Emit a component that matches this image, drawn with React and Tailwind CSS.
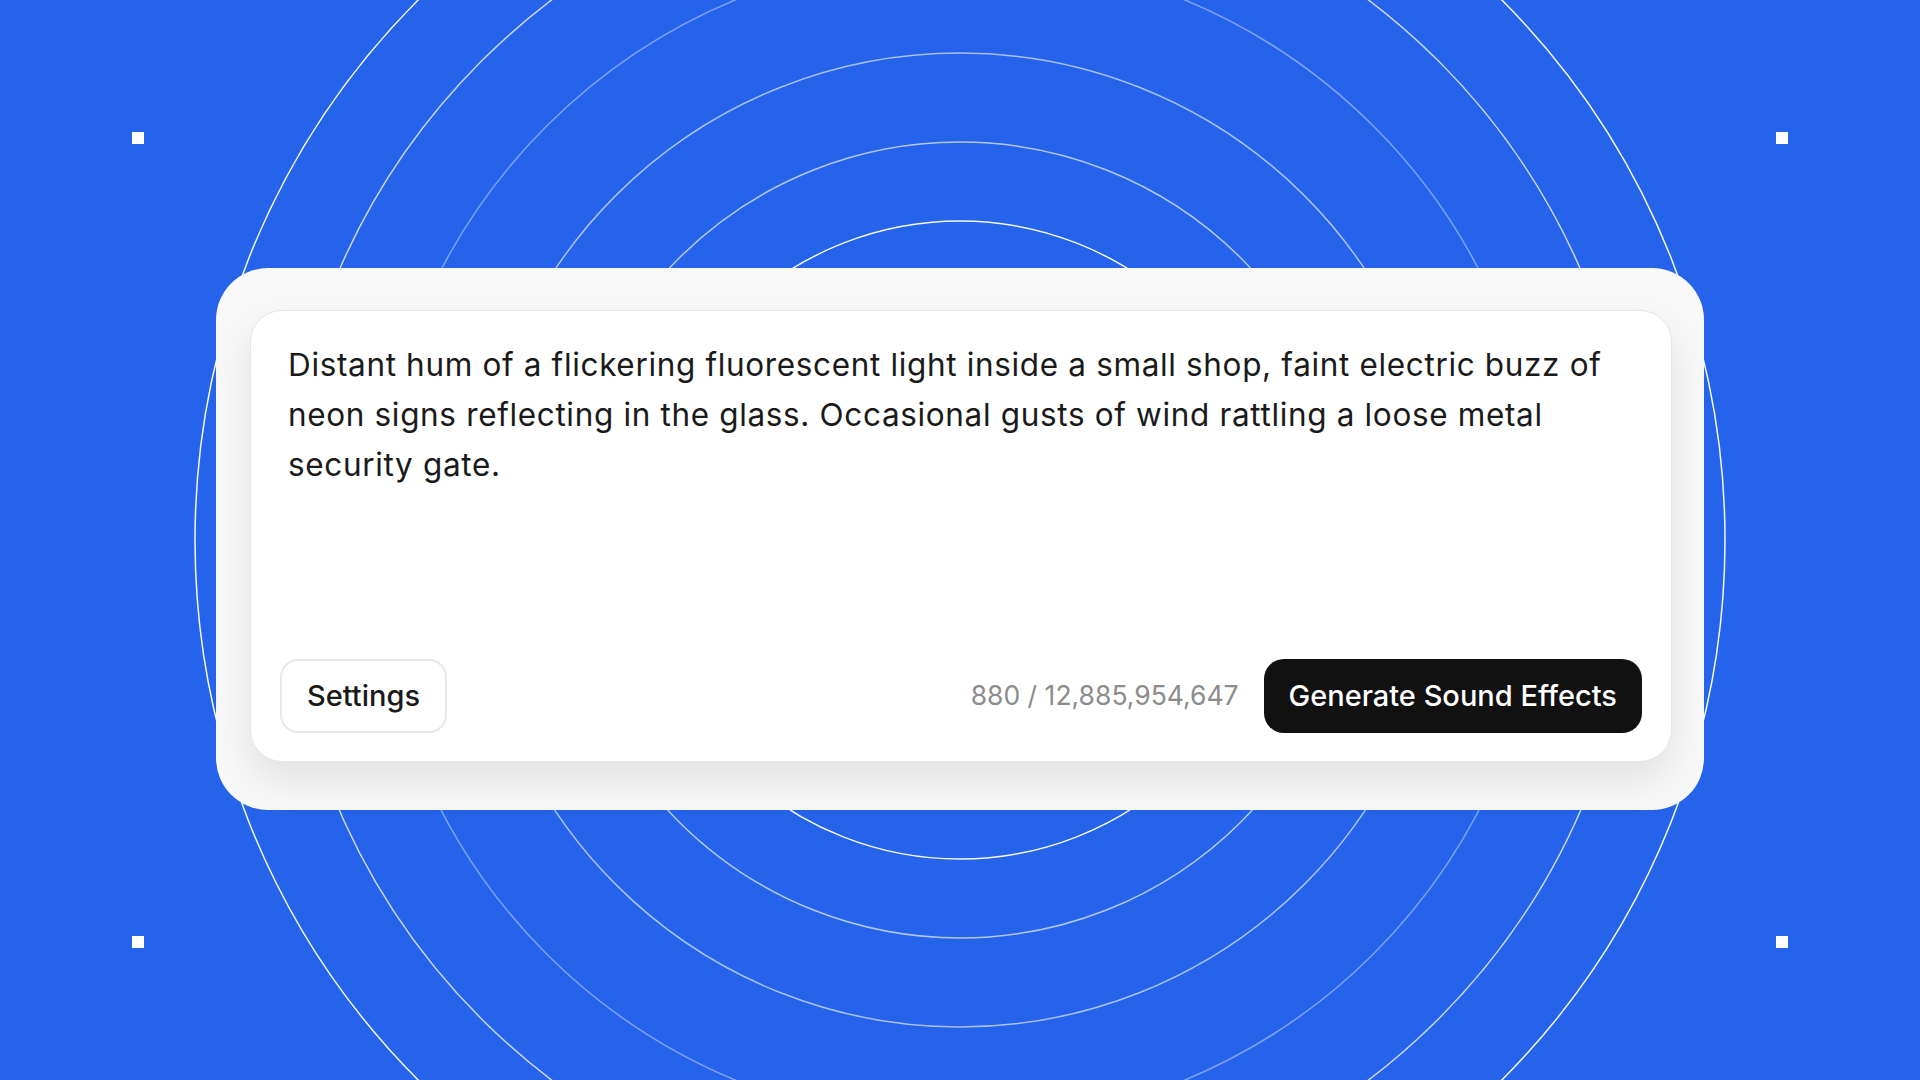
import React from "react";

const circles = [
  { r: 319, o: 0.95 },
  { r: 398, o: 0.65 },
  { r: 487, o: 0.6 },
  { r: 585, o: 0.4 },
  { r: 677, o: 0.75 },
  { r: 765, o: 0.95 },
];

function Rings() {
  return (
    <svg
      className="absolute inset-0"
      width="1920"
      height="1080"
      viewBox="0 0 1920 1080"
      fill="none"
    >
      {circles.map((c) => (
        <circle
          key={c.r}
          cx="960"
          cy="540"
          r={c.r}
          stroke="white"
          strokeOpacity={c.o}
          strokeWidth="1.5"
        />
      ))}
    </svg>
  );
}

export default function App() {
  return (
    <div
      className="relative w-[1920px] h-[1080px] overflow-hidden bg-[#2563eb] flex items-center justify-center"
      style={{ fontFamily: "Inter, 'Noto Sans', sans-serif" }}
    >
      <Rings />
      <div className="absolute left-[132px] top-[132px] w-[12px] h-[12px] bg-white" />
      <div className="absolute left-[1776px] top-[132px] w-[12px] h-[12px] bg-white" />
      <div className="absolute left-[132px] top-[936px] w-[12px] h-[12px] bg-white" />
      <div className="absolute left-[1776px] top-[936px] w-[12px] h-[12px] bg-white" />

      <div className="relative w-[1488px] h-[542px] mt-[-2px] rounded-[52px] bg-[#f8f8f8] pl-[34px] pr-[32px] pt-[42px] pb-[48px] flex">
        <div className="flex-1 flex flex-col rounded-[32px] bg-white border border-[#e6e6e6] shadow-[0_18px_40px_rgba(0,0,0,0.09)] px-[29px] pt-[29px] pb-[28px]">
          <p className="pl-[8px] pr-[4px] text-[31.5px] leading-[50px] tracking-[0.65px] text-[#1a1a1a] [font-variation-settings:'opsz'_14]">
            Distant hum of a flickering fluorescent light inside a small shop, faint electric buzz of neon signs reflecting in the glass. Occasional gusts of wind rattling a loose metal security gate.
          </p>
          <div className="mt-auto flex items-center justify-between">
            <button className="h-[74px] px-[25px] rounded-[18px] border-2 border-[#e8e8e8] bg-white text-[29px] font-medium text-[#1a1a1a]">
              Settings
            </button>
            <div className="flex items-center gap-[25px]">
              <span className="text-[26.5px] text-[#8c8c8c]">880 / 12,885,954,647</span>
              <button className="h-[74px] px-[25px] rounded-[20px] bg-[#111111] text-[29px] font-medium text-white">
                Generate Sound Effects
              </button>
            </div>
          </div>
        </div>
      </div>
    </div>
  );
}
